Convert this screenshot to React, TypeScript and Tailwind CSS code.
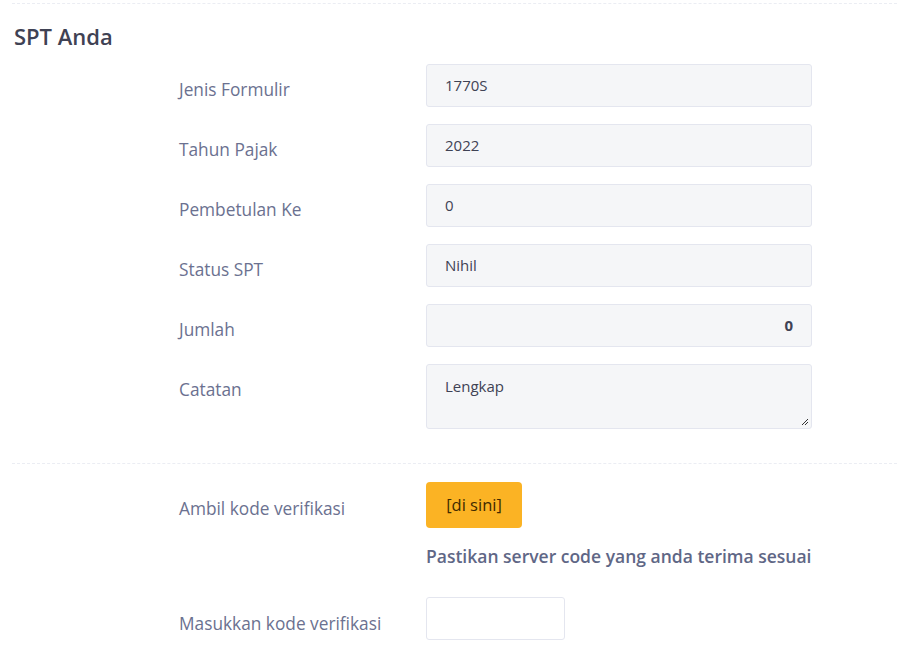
const font = { fontFamily: '"Open Sans", "Noto Sans", sans-serif' };

function Row({ label, children, h = "h-[43px]" }: { label: string; children: React.ReactNode; h?: string }) {
  return (
    <div className="flex items-start">
      <div className="w-[426px] pl-[179px] pt-[13px] text-[17.3px] text-[#6b7190]">{label}</div>
      <div className={`w-[386px] ${h}`}>{children}</div>
    </div>
  );
}

const box = "h-full w-full rounded-[3px] border border-[#e4e6ef] bg-[#f5f6f8] px-[18px] text-[15px] text-[#3f4254] flex items-center";

export default function App() {
  const fields = [
    ["Jenis Formulir", "1770S"],
    ["Tahun Pajak", "2022"],
    ["Pembetulan Ke", "0"],
    ["Status SPT", "Nihil"],
  ];
  return (
    <div className="w-[909px] h-[647px] overflow-hidden bg-white" style={font}>
      <div className="mx-[12px] mt-[3px] border-t border-dashed border-[#ebedf3]" />
      <h2 className="pl-[14px] pt-[16px] text-[22px] font-semibold text-[#3f4254]">SPT Anda</h2>
      <div className="mt-[11px] flex flex-col gap-[17px]">
        {fields.map(([l, v]) => (
          <Row key={l} label={l}>
            <div className={box}>{v}</div>
          </Row>
        ))}
        <Row label="Jumlah">
          <div className={`${box} justify-end font-bold`}>0</div>
        </Row>
        <Row label="Catatan" h="h-[65px]">
          <div className="relative h-full w-full rounded-[3px] border border-[#e4e6ef] bg-[#f5f6f8] px-[18px] pt-[10px] text-[15px] text-[#3f4254]">
            Lengkap
            <svg className="absolute right-[2px] bottom-[2px]" width="9" height="9" viewBox="0 0 9 9">
              <path d="M8 2 L2 8 M8 5 L5 8" stroke="#333" strokeWidth="1" />
            </svg>
          </div>
        </Row>
      </div>
      <div className="mx-[12px] mt-[34px] border-t border-dashed border-[#ebedf3]" />
      <div className="mt-[18px] flex items-start">
        <div className="w-[426px] pl-[179px] pt-[14px] text-[17.3px] text-[#6b7190]">Ambil kode verifikasi</div>
        <div>
          <div className="flex h-[46px] w-[96px] items-center justify-center rounded-[4px] bg-[#fbb324] text-[16.5px] text-[#3f2a00]">[di sini]</div>
          <div className="mt-[15px] text-[17.5px] font-semibold text-[#5f6786]">Pastikan server code yang anda terima sesuai</div>
        </div>
      </div>
      <div className="mt-[28px] flex items-start">
        <div className="w-[426px] pl-[179px] pt-[14px] text-[17.3px] text-[#6b7190]">Masukkan kode verifikasi</div>
        <div className="h-[43px] w-[139px] rounded-[3px] border border-[#e4e6ef] bg-white" />
      </div>
    </div>
  );
}
